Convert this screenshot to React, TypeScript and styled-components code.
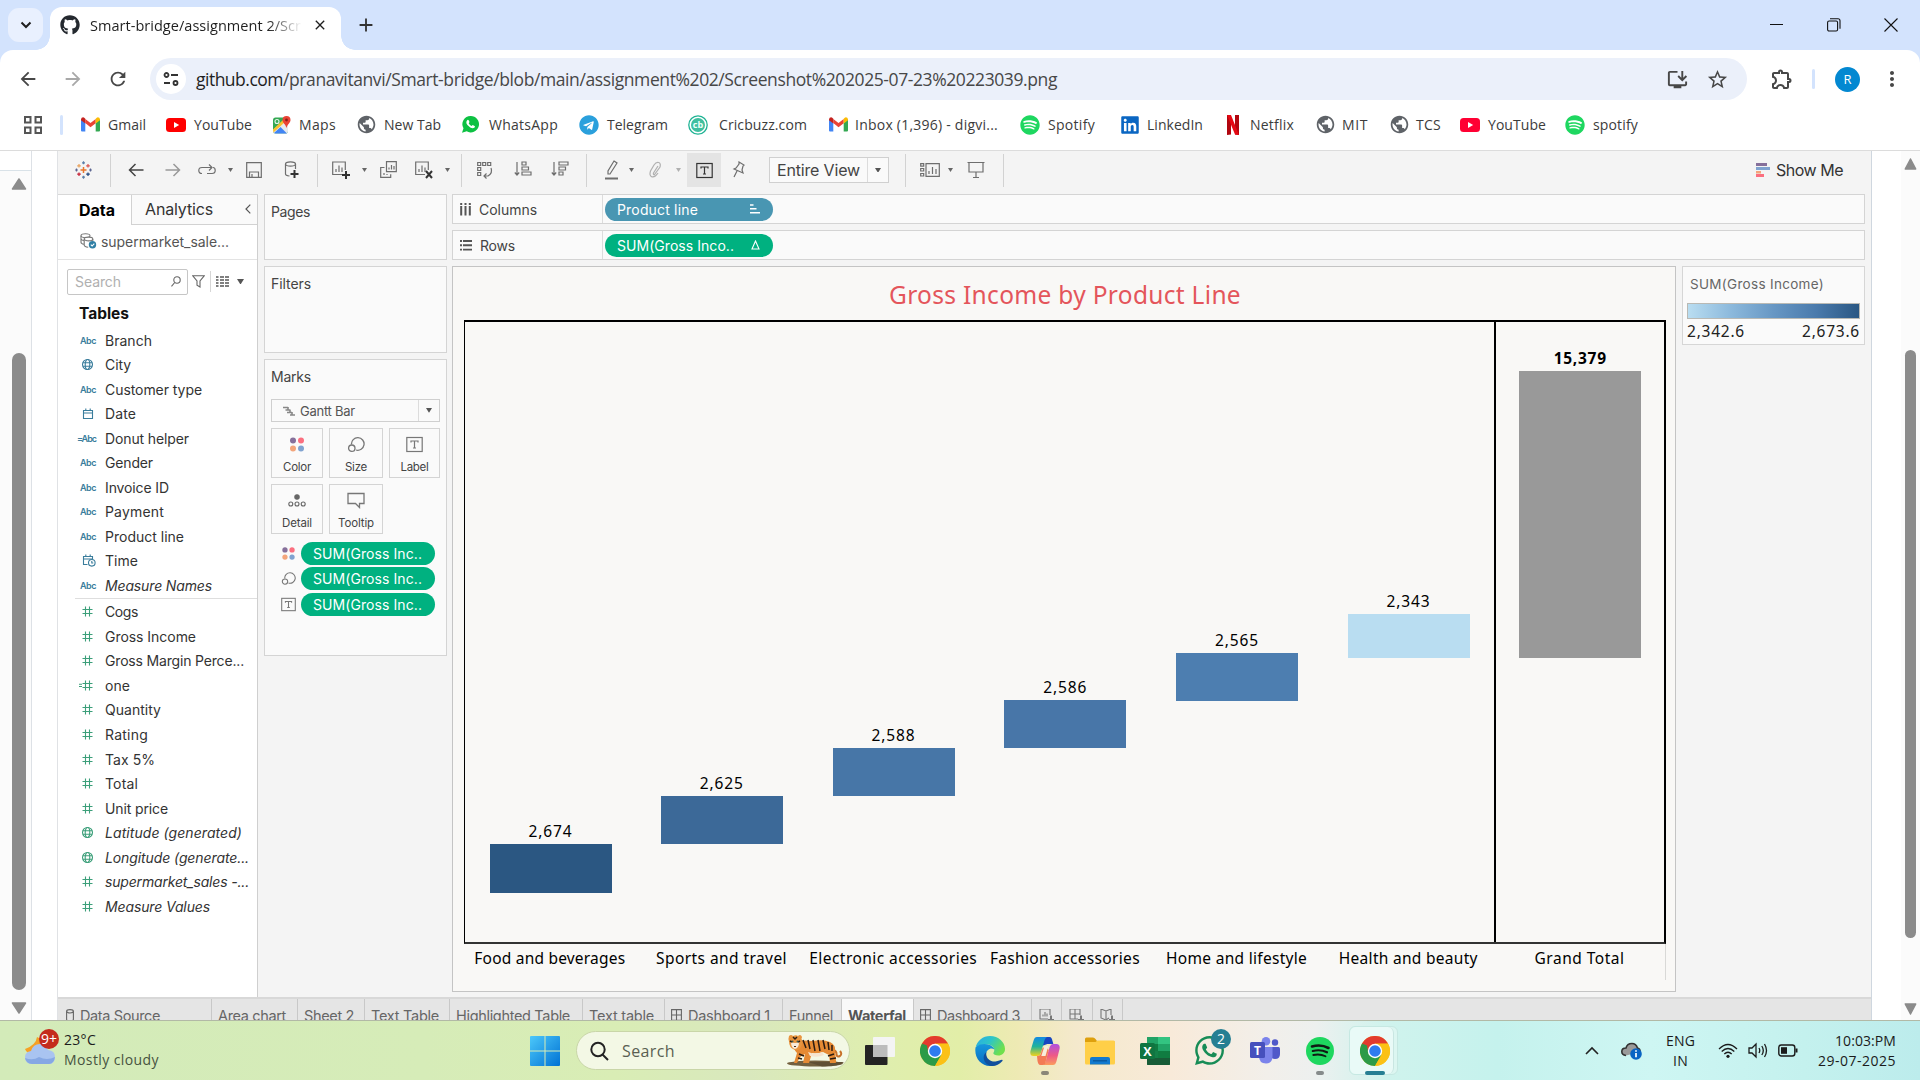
import React, { useLayoutEffect, useRef } from "react";
import styled, { createGlobalStyle, css } from "styled-components";
import { FaGithub, FaSpotify, FaWhatsapp, FaTelegram, FaLinkedin } from "react-icons/fa";
import {
  MdArrowBack,
  MdArrowForward,
  MdRefresh,
  MdStarBorder,
  MdMoreVert,
  MdOutlineExtension,
  MdOutlineInstallDesktop,
  MdClose,
  MdAdd,
  MdPublic,
} from "react-icons/md";

const ui = `"Open Sans", "Noto Sans", sans-serif`;
const panelFont = `Inter, "Liberation Sans", sans-serif`;
const chartFont = `"Noto Sans", "Open Sans", sans-serif`;

const Global = createGlobalStyle`
  *, *::before, *::after { box-sizing: border-box; }
  html, body { margin: 0; padding: 0; background: #fff; }
  body { font-family: ${ui}; overflow: hidden; }
  svg { display: block; flex: none; }
`;

/* Text whose tracking is adjusted so that it fills a known width. */
const FitSpan = styled.span`
  display: inline-block;
  white-space: pre;
`;
function Fit({ w, children }: { w: number; children: string }) {
  const ref = useRef<HTMLSpanElement>(null);
  useLayoutEffect(() => {
    const el = ref.current;
    if (!el) return;
    el.style.letterSpacing = "0px";
    const natural = el.getBoundingClientRect().width;
    el.style.letterSpacing = `${(w - natural) / children.length}px`;
  }, [w, children]);
  return <FitSpan ref={ref}>{children}</FitSpan>;
}

const Screen = styled.div`
  width: 1920px;
  height: 1080px;
  display: flex;
  flex-direction: column;
  overflow: hidden;
  background: #fff;
`;

/* ---------- Browser chrome ---------- */
const TabStrip = styled.div`
  height: 50px;
  flex: none;
  background: #d3e3fd;
  display: flex;
  align-items: flex-start;
  padding-left: 8px;
`;
const TabSearch = styled.div`
  width: 35px;
  height: 34px;
  margin-top: 8px;
  border-radius: 11px;
  background: #e9f0fe;
  display: flex;
  align-items: center;
  justify-content: center;
`;
const Tab = styled.div`
  position: relative;
  width: 291px;
  height: 43px;
  margin: 7px 0 0 7px;
  padding: 0 12px 7px 10px;
  background: #fff;
  border-radius: 12px 12px 0 0;
  display: flex;
  align-items: center;
  font-size: 14.5px;
  color: #1f1f1f;
  &::before, &::after {
    content: "";
    position: absolute;
    bottom: 0;
    width: 14px;
    height: 14px;
  }
  &::before { left: -14px; background: radial-gradient(circle at 0 0, transparent 13.5px, #fff 14px); }
  &::after { right: -14px; background: radial-gradient(circle at 100% 0, transparent 13.5px, #fff 14px); }
`;
const TabTitle = styled.div`
  width: 211px;
  margin: 0 11px 0 10px;
  overflow: hidden;
  white-space: nowrap;
  -webkit-mask-image: linear-gradient(90deg, #000 178px, transparent 212px);
  mask-image: linear-gradient(90deg, #000 178px, transparent 212px);
`;
const NewTab = styled.div`
  margin: 14px 0 0 14px;
  color: #333;
  flex: 1;
`;
const WindowButtons = styled.div`
  display: flex;
  align-items: center;
  height: 49px;
  gap: 43px;
  padding-right: 22px;
`;
const TopRow = styled.div`
  height: 58px;
  flex: none;
  background: #d3e3fd;
  display: flex;
`;
const TopInner = styled.div`
  flex: 1;
  background: #fff;
  border-radius: 13px 13px 0 0;
  display: flex;
  align-items: center;
  padding: 0 16px 0 17px;
  color: #474747;
`;
const NavButtons = styled.div`
  display: flex;
  gap: 23px;
  width: 133px;
`;
const Omnibox = styled.div`
  width: 1597px;
  height: 42px;
  border-radius: 21px;
  background: #ebf0fa;
  display: flex;
  align-items: center;
  padding: 0 18px 0 6px;
`;
const SiteInfo = styled.div`
  width: 30px;
  height: 30px;
  border-radius: 50%;
  background: #fff;
  display: flex;
  align-items: center;
  justify-content: center;
  margin-right: 10px;
`;
const Url = styled.div`
  flex: 1;
  font-size: 17.5px;
  color: #474747;
  white-space: nowrap;
  b { font-weight: 400; color: #1f1f1f; }
`;
const OmniIcons = styled.div`
  display: flex;
  align-items: center;
  gap: 17px;
`;
const ActionIcons = styled.div`
  flex: 1;
  display: flex;
  align-items: center;
  padding-left: 23px;
`;
const ActionDivider = styled.div`
  width: 3px;
  height: 20px;
  background: #d3e3fd;
  border-radius: 2px;
  margin: 0 20px 0 18px;
`;
const Avatar = styled.div`
  width: 25px;
  height: 25px;
  border-radius: 50%;
  background: #0388d1;
  color: #fff;
  font-size: 13px;
  display: flex;
  align-items: center;
  justify-content: center;
  margin-right: 20px;
`;
const Bookmarks = styled.div`
  height: 43px;
  flex: none;
  display: flex;
  align-items: center;
  padding: 0 0 9px 24px;
  border-bottom: 1px solid #dcdcdc;
  font-size: 14px;
  color: #3c3c3c;
`;
const BookmarkGrid = styled.div`
  width: 36px;
`;
const BookmarkDivider = styled.div`
  width: 3px;
  height: 20px;
  background: #d3e3fd;
  border-radius: 2px;
  margin-right: 18px;
`;
const Bookmark = styled.div<{ $w: number; $icon: number }>`
  width: ${(p) => p.$w}px;
  display: flex;
  align-items: center;
  white-space: nowrap;
  flex: none;
  > :first-child { width: ${(p) => p.$icon}px; flex: none; display: flex; }
`;

const GmailIcon = () => (
  <svg width="19" height="15" viewBox="0 0 19 15">
    <path d="M0 2v11.5q0 1 1 1h3.3V6z" fill="#4285f4" />
    <path d="M19 2v11.5q0 1-1 1h-3.3V6z" fill="#34a853" />
    <path d="M4.3 6v-4l5.2 4 5.2-4v4.2l-5.2 4z" fill="#ea4335" />
    <path d="M0 2.2Q.3.2 2.2.2 3.2.4 4.3 1.7V6.4L0 3.2z" fill="#c5221f" />
    <path d="M19 2.2Q18.7.2 16.8.2 15.8.4 14.7 1.7V6.4L19 3.2z" fill="#fbbc04" />
  </svg>
);
const YoutubeIcon = ({ c }: { c: string }) => (
  <svg width="20" height="14" viewBox="0 0 20 14">
    <rect width="20" height="14" rx="3.5" fill={c} />
    <path d="M8 4l5.2 3L8 10z" fill="#fff" />
  </svg>
);
const MapsIcon = () => (
  <svg width="19" height="18" viewBox="0 0 19 18">
    <rect x="1" y="1.5" width="15" height="16" rx="2.5" fill="#34a853" />
    <path d="M1 14L12 4l4 2v9q0 2.5-2.5 2.5H3.5Q1 17.5 1 15z" fill="#e8eaed" />
    <path d="M2 17l6.5-6 6.5 6.5H3.5z" fill="#4285f4" />
    <path d="M1 13.5L11 4l2 2L1.5 16.5z" fill="#fbc02d" />
    <path d="M14.5 0a4 4 0 0 1 4 4c0 3-3.2 4-4 8-.8-4-4-5-4-8a4 4 0 0 1 4-4z" fill="#ea4335" />
    <circle cx="14.5" cy="4" r="1.4" fill="#8c1d18" />
    <circle cx="5" cy="5.5" r="2" fill="none" stroke="#e6f4ea" strokeWidth="1.1" />
  </svg>
);
const CricbuzzIcon = () => (
  <svg width="20" height="20" viewBox="0 0 20 20">
    <circle cx="10" cy="10" r="9.2" fill="#fff" stroke="#1fb394" strokeWidth="1.3" />
    <circle cx="10" cy="10" r="7" fill="#3fbf9f" />
    <text x="10" y="13" textAnchor="middle" fontSize="9" fontWeight="700" fill="#effffb" fontFamily="Open Sans, sans-serif">cb</text>
  </svg>
);
const NetflixIcon = () => (
  <svg width="12" height="20" viewBox="0 0 12 20">
    <path d="M0 0h4v19.5L0 20z" fill="#b1060f" />
    <path d="M8 0h4v20l-4-.5z" fill="#b1060f" />
    <path d="M0 0h4l8 20-4-.5z" fill="#e50914" />
  </svg>
);
const WhatsAppSmall = () => (
  <svg width="17" height="17" viewBox="0 0 17 17">
    <path d="M8.7 0a8.2 8.2 0 1 1-4 15.3L0 16.8l1.5-4.5A8.2 8.2 0 0 1 8.7 0z" fill="#0dc143" />
    <path d="M5 4.500q1-1.300 1.800 0l.7 1.600-.8 1.200q1 1.900 2.900 2.700l1.100-1 1.900 1q.8.5 0 1.400-1.700 1.500-4.400 0Q5 9.500 4.400 7.300 4.100 5.500 5 4.500z" fill="#fff" />
  </svg>
);

type Mark = { w: number; icon: number; node: React.ReactNode; label: string; tw: number };
const bookmarks: Mark[] = [
  { w: 85, icon: 27, node: <GmailIcon />, label: "Gmail", tw: 38 },
  { w: 106, icon: 28, node: <YoutubeIcon c="#f00" />, label: "YouTube", tw: 58 },
  { w: 84, icon: 27, node: <MapsIcon />, label: "Maps", tw: 37 },
  { w: 106, icon: 28, node: <MdPublic size={21} color="#5f6368" />, label: "New Tab", tw: 57 },
  { w: 117, icon: 27, node: <WhatsAppSmall />, label: "WhatsApp", tw: 69 },
  { w: 109, icon: 28, node: <FaTelegram size={20} color="#2ba0dc" />, label: "Telegram", tw: 61 },
  { w: 141, icon: 31, node: <CricbuzzIcon />, label: "Cricbuzz.com", tw: 88 },
  { w: 191, icon: 26, node: <GmailIcon />, label: "Inbox (1,396) - digvi...", tw: 143 },
  { w: 100, icon: 28, node: <FaSpotify size={20} color="#1ed760" />, label: "Spotify", tw: 47 },
  { w: 107, icon: 27, node: <FaLinkedin size={20} color="#0a66c2" />, label: "LinkedIn", tw: 56 },
  { w: 88, icon: 23, node: <NetflixIcon />, label: "Netflix", tw: 44 },
  { w: 74, icon: 27, node: <MdPublic size={21} color="#5f6368" />, label: "MIT", tw: 26 },
  { w: 71, icon: 27, node: <MdPublic size={21} color="#5f6368" />, label: "TCS", tw: 25 },
  { w: 105, icon: 28, node: <YoutubeIcon c="#ff0033" />, label: "YouTube", tw: 58 },
  { w: 90, icon: 28, node: <FaSpotify size={20} color="#1ed760" />, label: "spotify", tw: 45 },
];

/* ---------- Page ---------- */
const Page = styled.div`
  height: 869px;
  flex: none;
  display: flex;
  overflow: hidden;
`;
const LeftGutter = styled.div`
  width: 57px;
  flex: none;
  display: flex;
`;
const ScrollColumn = styled.div`
  width: 32px;
  border-right: 1px solid #dde1e6;
  display: flex;
  flex-direction: column;
`;
const ScrollHead = styled.div`
  height: 20px;
  border-bottom: 1px solid #d9e2e8;
`;
const ScrollTrack = styled.div<{ $pl: number }>`
  flex: 1;
  background: #fbfbfb;
  padding: 7px 0 0 ${(p) => p.$pl}px;
  display: flex;
  flex-direction: column;
`;
const Thumb = styled.div<{ $top: number; $h: number; $w: number; $after: number }>`
  width: ${(p) => p.$w}px;
  height: ${(p) => p.$h}px;
  margin: ${(p) => p.$top}px 0 ${(p) => p.$after}px 1px;
  border-radius: 8px;
  background: #8b8b8b;
  flex: none;
`;
const ScrollArrow = ({ down, w = 16 }: { down?: boolean; w?: number }) => (
  <svg width={w} height="12" viewBox="0 0 16 12" preserveAspectRatio="none">
    <path d={down ? "M1.5 1h13L8 11z" : "M1.5 11h13L8 1z"} fill="#8b8b8b" stroke="#8b8b8b" strokeWidth="1.5" strokeLinejoin="round" />
  </svg>
);
const RightGutter = styled.div`
  width: 49px;
  flex: none;
  display: flex;
  border-left: 1px solid #cfd7df;
  padding-left: 29px;
`;
const Tableau = styled.div`
  width: 1814px;
  background: #f4f4f4;
  border-left: 1px solid #e0e2e5;
  display: flex;
  flex-direction: column;
  font-family: ${panelFont};
  color: #444;
`;
const ToolBar = styled.div`
  height: 43px;
  flex: none;
  display: flex;
  align-items: center;
  padding-bottom: 5px;
`;
const Slot = styled.div<{ $w: number; $ml: number; $on?: boolean }>`
  width: ${(p) => p.$w}px;
  margin-left: ${(p) => p.$ml}px;
  height: 34px;
  flex: none;
  display: flex;
  align-items: center;
  justify-content: center;
  ${(p) => p.$on && css`background: #e4e4e4;`}
`;
const Sep = styled.div<{ $ml: number }>`
  width: 1px;
  height: 33px;
  background: #d2d2d2;
  margin-left: ${(p) => p.$ml}px;
  flex: none;
`;
const ViewSelect = styled.div`
  width: 120px;
  height: 26px;
  margin-left: 24px;
  border: 1px solid #d0d0d0;
  background: #fafafa;
  display: flex;
  align-items: center;
  font-size: 16px;
  color: #444;
  padding-left: 7px;
  flex: none;
`;
const SelectArrow = styled.div`
  margin-left: auto;
  width: 21px;
  height: 100%;
  border-left: 1px solid #dcdcdc;
  display: flex;
  align-items: center;
  justify-content: center;
`;
const ShowMe = styled.div`
  margin: 0 28px 0 auto;
  display: flex;
  align-items: center;
  gap: 6px;
  font-size: 16px;
  color: #333;
`;
const Caret = ({ s = 5, c = "#666" }: { s?: number; c?: string }) => (
  <svg width={s} height={s * 0.8} viewBox="0 0 10 8">
    <path d="M0 0h10L5 8z" fill={c} />
  </svg>
);

const Work = styled.div`
  height: 803px;
  flex: none;
  display: flex;
`;
const DataPane = styled.div`
  width: 200px;
  flex: none;
  background: #fff;
  border-right: 1px solid #cfcfcf;
  border-top: 1px solid #d8d8d8;
  display: flex;
  flex-direction: column;
`;
const PaneTabs = styled.div`
  height: 30px;
  flex: none;
  display: flex;
  color: #222;
`;
const PaneTab = styled.div<{ $active?: boolean }>`
  width: ${(p) => (p.$active ? 73 : 126)}px;
  padding-left: ${(p) => (p.$active ? 21 : 13)}px;
  padding-right: 6px;
  padding-bottom: 1px;
  display: flex;
  align-items: center;
  font-size: 16px;
  font-weight: ${(p) => (p.$active ? 700 : 400)};
  color: ${(p) => (p.$active ? "#000" : "#333")};
  justify-content: space-between;
  ${(p) =>
    !p.$active &&
    css`
      background: #fafafa;
      border-left: 1px solid #d2d2d2;
      border-bottom: 1px solid #d2d2d2;
    `}
`;
const Source = styled.div`
  height: 35px;
  flex: none;
  border-bottom: 1px solid #e3e3e3;
  display: flex;
  align-items: center;
  padding: 0 0 2px 22px;
  gap: 4px;
  font-size: 14px;
  color: #555;
`;
const SearchRow = styled.div`
  height: 25px;
  margin: 9px 0 0 9px;
  flex: none;
  display: flex;
  align-items: center;
`;
const SearchBox = styled.div`
  width: 121px;
  height: 26px;
  border: 1px solid #c6c6c6;
  border-radius: 2px;
  display: flex;
  align-items: center;
  justify-content: space-between;
  padding: 0 6px 0 7px;
  font-size: 14px;
  color: #b0b0b0;
  margin-right: 4px;
`;
const MiniSep = styled.div`
  width: 1px;
  height: 21px;
  background: #d6d6d6;
  margin: 0 5px 0 5px;
`;
const TablesTitle = styled.div`
  margin: 11px 0 5px 21px;
  height: 18px;
  line-height: 18px;
  font-size: 15.5px;
  font-weight: 700;
  color: #111;
`;
const FieldRow = styled.div<{ $italic?: boolean; $h: number }>`
  height: ${(p) => p.$h}px;
  flex: none;
  display: flex;
  align-items: center;
  font-size: 14px;
  color: #333;
  font-style: ${(p) => (p.$italic ? "italic" : "normal")};
`;
const FieldIcon = styled.div`
  width: 47px;
  padding-right: 9px;
  flex: none;
  display: flex;
  align-items: center;
  justify-content: flex-end;
  color: #3a7d9c;
  font-size: 9px;
  font-weight: 600;
  font-style: normal;
`;
const GlyphNudge = styled.div<{ $right: number }>`
  margin-right: ${(p) => p.$right}px;
`;
const FieldRule = styled.div`
  height: 1px;
  background: #dedede;
  margin: 0 0 1px 17px;
  flex: none;
`;

const BLUE = "#3a7d9c";
const GREEN = "#3c9f7a";
const AbcIcon = ({ calc }: { calc?: boolean }) => <Fit w={calc ? 19 : 16}>{calc ? "=Abc" : "Abc"}</Fit>;
const GlobeGlyph = ({ c }: { c: string }) => (
  <svg width="13" height="13" viewBox="0 0 13 13" fill="none" stroke={c} strokeWidth="1.1">
    <circle cx="6.5" cy="6.5" r="5" />
    <ellipse cx="6.5" cy="6.5" rx="2.3" ry="5" />
    <path d="M2 4.7h9M2 8.3h9" />
  </svg>
);
const HashGlyph = ({ calc }: { calc?: boolean }) => (
  <svg width="14" height="11" viewBox="0 0 14 11" stroke={GREEN} strokeWidth="1.1" fill="none">
    <path d="M6.500.5v10M10.500.5v10M3.500 3.500h10M3.500 7.500h10" />
    {calc && <path d="M0 4.300h3M0 6.500h3" />}
  </svg>
);
const CalGlyph = () => (
  <svg width="12" height="12" viewBox="0 0 12 12" stroke={BLUE} fill="none">
    <path d="M1.500 2.500h9v8h-9zM1.500 5h9M3.800.5v2.500M8.200.5v2.500" strokeWidth="1.1" />
  </svg>
);
const CalClockGlyph = () => (
  <svg width="14" height="13" viewBox="0 0 14 13" stroke={BLUE} fill="none" strokeWidth="1.1">
    <path d="M5.500 10.500h-4v-8h9v3M1.500 5h9M3.800.5v2.500M8.200.5v2.500" />
    <circle cx="9.800" cy="8.800" r="3.300" fill="#fff" />
    <path d="M9.800 7v2h1.500" />
  </svg>
);
type Field = { k: string; n: string; w: number; it?: boolean };
const dims: Field[] = [
  { k: "abc", n: "Branch", w: 47 },
  { k: "geo", n: "City", w: 26 },
  { k: "abc", n: "Customer type", w: 97 },
  { k: "cal", n: "Date", w: 31 },
  { k: "abcc", n: "Donut helper", w: 84 },
  { k: "abc", n: "Gender", w: 48 },
  { k: "abc", n: "Invoice ID", w: 64 },
  { k: "abc", n: "Payment", w: 59 },
  { k: "abc", n: "Product line", w: 79 },
  { k: "time", n: "Time", w: 33 },
  { k: "abc", n: "Measure Names", w: 107, it: true },
];
const measures: Field[] = [
  { k: "num", n: "Cogs", w: 33 },
  { k: "num", n: "Gross Income", w: 91 },
  { k: "num", n: "Gross Margin Perce...", w: 139 },
  { k: "numc", n: "one", w: 25 },
  { k: "num", n: "Quantity", w: 56 },
  { k: "num", n: "Rating", w: 43 },
  { k: "num", n: "Tax 5%", w: 50 },
  { k: "num", n: "Total", w: 33 },
  { k: "num", n: "Unit price", w: 63 },
  { k: "geog", n: "Latitude (generated)", w: 137, it: true },
  { k: "geog", n: "Longitude (generate...", w: 144, it: true },
  { k: "num", n: "supermarket_sales -...", w: 144, it: true },
  { k: "num", n: "Measure Values", w: 105, it: true },
];
function glyph(k: string) {
  switch (k) {
    case "abc": return <AbcIcon />;
    case "abcc": return <AbcIcon calc />;
    case "geo": return <GlobeGlyph c={BLUE} />;
    case "geog": return <GlobeGlyph c={GREEN} />;
    case "cal": return <CalGlyph />;
    case "time": return <CalClockGlyph />;
    case "numc": return <HashGlyph calc />;
    default: return <HashGlyph />;
  }
}
const glyphInset: Record<string, number> = { geo: 2, geog: 2, cal: 2, num: 3, numc: 3 };
const FieldItem = ({ f, h }: { f: Field; h: number }) => (
  <FieldRow $h={h} $italic={f.it}>
    <FieldIcon>
      <GlyphNudge $right={glyphInset[f.k] ?? 0}>{glyph(f.k)}</GlyphNudge>
    </FieldIcon>
    <Fit w={f.w}>{f.n}</Fit>
  </FieldRow>
);

const Cards = styled.div`
  width: 183px;
  margin-left: 6px;
  flex: none;
  display: flex;
  flex-direction: column;
  gap: 6px;
`;
const Card = styled.div<{ $h: number }>`
  height: ${(p) => p.$h}px;
  background: #fafafa;
  border: 1px solid #d4d4d4;
  padding: 0 6px;
  font-size: 14px;
  color: #444;
  flex: none;
`;
const CardTitle = styled.div`
  height: 33px;
  line-height: 33px;
`;
const MarkType = styled.div`
  height: 23px;
  width: 169px;
  margin-top: 6px;
  border: 1px solid #cfcfcf;
  display: flex;
  align-items: center;
  font-size: 13px;
  color: #555;
  padding-left: 11px;
  gap: 5px;
`;
const MarkGrid = styled.div`
  margin-top: 6px;
  display: grid;
  grid-template-columns: 52px 54px 51px;
  column-gap: 6px;
  row-gap: 6px;
  grid-auto-rows: 50px;
`;
const MarkButton = styled.div`
  border: 1px solid #d4d4d4;
  display: flex;
  flex-direction: column;
  align-items: center;
  font-size: 11.5px;
  line-height: 14px;
  color: #444;
  padding-top: 7px;
  > svg { margin-bottom: 7px; }
`;
const PillList = styled.div`
  margin-top: 8px;
  display: flex;
  flex-direction: column;
  gap: 2.4px;
`;
const PillRow = styled.div`
  display: flex;
  align-items: center;
  gap: 5px;
  padding-left: 10px;
  > svg { width: 15px; height: 15px; }
`;
const Pill = styled.div<{ $w: number; $c: string; $pl: number }>`
  width: ${(p) => p.$w}px;
  height: 23px;
  border-radius: 12px;
  background: ${(p) => p.$c};
  color: #fff;
  display: flex;
  align-items: center;
  justify-content: space-between;
  padding: 0 13px 0 ${(p) => p.$pl}px;
  font-size: 14px;
  flex: none;
`;
const DotsIcon = () => (
  <svg width="16" height="17" viewBox="0 0 16 17">
    <circle cx="4" cy="4.5" r="3" fill="#86709b" />
    <circle cx="12" cy="4.5" r="3" fill="#fb6f7f" />
    <circle cx="4" cy="12.5" r="3" fill="#f3a57b" />
    <circle cx="12" cy="12.5" r="3" fill="#80a3d0" />
  </svg>
);
const SizeIcon = () => (
  <svg width="18" height="17" viewBox="0 0 18 17" fill="none" stroke="#777" strokeWidth="1.3">
    <path d="M4.500 8.500A6.300 6.300 0 1 1 9 14" />
    <circle cx="4.8" cy="12.2" r="3.2" />
  </svg>
);
const TIcon = ({ c = "#777", w = 17 }: { c?: string; w?: number }) => (
  <svg width={w} height="17" viewBox="0 0 17 17" fill="none" stroke={c} strokeWidth="1.2">
    <rect x=".8" y="1.5" width="15.4" height="14" />
    <path d="M5 6.500V5h7v1.500M8.500 5v7M7 12h3" />
  </svg>
);
const DetailIcon = () => (
  <svg width="18" height="17" viewBox="0 0 18 17" fill="none" stroke="#666" strokeWidth="1.1">
    <circle cx="9" cy="5" r="2.2" fill="#666" />
    <circle cx="2.8" cy="12" r="2" />
    <circle cx="9" cy="12" r="2" />
    <circle cx="15.2" cy="12" r="2" />
  </svg>
);
const TooltipIcon = () => (
  <svg width="18" height="17" viewBox="0 0 18 17" fill="none" stroke="#777" strokeWidth="1.3">
    <path d="M1 1.500h16v10h-4.500v4l-4-4H1z" />
  </svg>
);

const Canvas = styled.div`
  width: 1413px;
  margin-left: 5px;
  display: flex;
  flex-direction: column;
`;
const Shelf = styled.div`
  height: 30px;
  margin-bottom: 6px;
  border: 1px solid #d4d4d4;
  background: #fafafa;
  display: flex;
  align-items: center;
  flex: none;
  font-size: 14px;
`;
const ShelfName = styled.div`
  width: 150px;
  height: 100%;
  border-right: 1px solid #dcdcdc;
  display: flex;
  align-items: center;
  padding: 0 0 0 7px;
  gap: 8px;
  margin-right: 2px;
  color: #444;
`;
const ViewArea = styled.div`
  display: flex;
  gap: 6px;
  align-items: flex-start;
`;
const View = styled.div`
  width: 1224px;
  height: 726px;
  background: #f9f8f6;
  border: 1px solid #c4c4c4;
  padding: 14px 9px 0 11px;
  font-family: ${chartFont};
`;
const ChartTitle = styled.div`
  height: 36px;
  line-height: 28px;
  text-align: center;
  color: #e4555b;
  font-size: 24.5px;
`;
const ChartFrame = styled.div`
  height: 624px;
  margin-top: 3px;
  border: 2px solid #000;
  border-left-width: 1px;
  border-bottom-color: #333;
  display: grid;
  grid-template-columns: 171px repeat(5, 171.7px) 1fr;
`;
const ChartCell = styled.div<{ $total?: boolean }>`
  display: flex;
  flex-direction: column;
  align-items: center;
  justify-content: flex-end;
  ${(p) => p.$total && css`border-left: 2px solid #000;`}
`;
const BarLabel = styled.div<{ $bold?: boolean }>`
  height: 20px;
  line-height: 20px;
  margin-bottom: 3px;
  font-size: 15.5px;
  color: #000;
  font-weight: ${(p) => (p.$bold ? 700 : 400)};
`;
const Bar = styled.div<{ $c: string }>`
  width: 122px;
  background: ${(p) => p.$c};
  flex: none;
`;
const AxisLabels = styled.div`
  display: grid;
  grid-template-columns: repeat(6, 171.7px) 1fr;
  height: 36px;
  border-right: 1px solid #d9d9d7;
  text-align: center;
  font-size: 15.5px;
  line-height: 29px;
  color: #000;
`;
const bars = [
  { n: "Food and beverages", w: 151, v: "2,674", top: 844, bottom: 893, c: "#2b5782" },
  { n: "Sports and travel", w: 131, v: "2,625", top: 796, bottom: 844, c: "#3c6998" },
  { n: "Electronic accessories", w: 168, v: "2,588", top: 748, bottom: 796, c: "#4776a7" },
  { n: "Fashion accessories", w: 150, v: "2,586", top: 700, bottom: 748, c: "#4876a8" },
  { n: "Home and lifestyle", w: 141, v: "2,565", top: 653, bottom: 701, c: "#4d7eb0" },
  { n: "Health and beauty", w: 139, v: "2,343", top: 614, bottom: 658, c: "#b9ddf1" },
  { n: "Grand Total", w: 90, v: "15,379", top: 371, bottom: 658, c: "#999999" },
];
const FRAME_BOTTOM = 942;

const Legend = styled.div`
  width: 183px;
  height: 79px;
  border: 1px solid #d6d6d6;
  background: #fafafa;
  padding: 0 4px;
`;
const LegendTitle = styled.div`
  height: 36px;
  line-height: 34px;
  padding-left: 3px;
  font-size: 13.5px;
  color: #666;
`;
const LegendRamp = styled.div`
  height: 16px;
  border: 1px solid #b9b9b4;
  background: linear-gradient(90deg, #b9ddf1, #8cb9dc 25%, #6797c4 50%, #4a7aac 75%, #2a5783);
`;
const LegendScale = styled.div`
  display: flex;
  justify-content: space-between;
  font-family: ${chartFont};
  font-size: 15.5px;
  line-height: 25px;
  color: #222;
`;

const SheetTabs = styled.div`
  height: 30px;
  background: #e5e5e5;
  border-top: 2px solid #d8d8d8;
  display: flex;
  font-size: 14.5px;
  color: #666;
  flex: none;
`;
const SheetTab = styled.div<{ $w: number; $active?: boolean }>`
  width: ${(p) => p.$w}px;
  border-right: 1px solid #c8c8c8;
  padding: 7px 0 0 6px;
  display: flex;
  align-items: flex-start;
  gap: 6px;
  flex: none;
  line-height: 19px;
  ${(p) => p.$active && css`background: #f9f9f9; font-weight: 700; color: #555;`}
  > svg { margin-top: 3px; }
`;
const GridGlyph = () => (
  <svg width="11" height="12" viewBox="0 0 11 12" fill="none" stroke="#666" strokeWidth="1.1">
    <path d="M.6.6h9.800v10.800H.6zM5.500.6v10.800M.6 6h9.800" />
  </svg>
);
const DbGlyph = () => (
  <svg width="10" height="13" viewBox="-2 0 10 13" fill="none" stroke="#666" strokeWidth="1.1">
    <ellipse cx="4" cy="2.3" rx="3.4" ry="1.7" />
    <path d="M.6 2.300v8c0 2.200 6.800 2.200 6.800 0v-8" />
  </svg>
);
const NewSheetGlyph = ({ k }: { k: number }) => (
  <svg width="16" height="14" viewBox="-1 1 16 14" fill="none" stroke="#777" strokeWidth="1.1">
    {k === 0 && <path d="M9 11H1V1h10v6M4 8.500V6.500M6 8.500V4M8 8.500V5.500" />}
    {k === 1 && <path d="M9 11H1V1h10v6M6 1v10M1 6h10" />}
    {k === 2 && <path d="M9 10L6 12 1 10V1l5 2 5-2v6M6 3v8" />}
    <path d="M12 7.500v6M9 12h6" strokeWidth="2" />
  </svg>
);

/* ---------- Taskbar ---------- */
const Taskbar = styled.div`
  height: 60px;
  flex: none;
  border-top: 1px solid #b2b9a6;
  background: linear-gradient(90deg, #d3ebb9 0, #d6ecb8 22%, #d9edb5 32%, #d9e8bd 39%, #dfeeae 46%, #e2eea8 50%, #eeeab4 53%, #f4e9cc 56%, #f8ead9 61%, #f2efea 66%, #edf0ef 68.5%, #d0f3ed 72%, #c5f2ed 78%, #cef6f3 86%, #c4f1ee 94%, #bcecec 100%);
  display: flex;
  align-items: center;
  font-family: ${ui};
  font-size: 14px;
`;
const Weather = styled.div`
  width: 530px;
  padding-left: 24px;
  display: flex;
  align-items: center;
  gap: 4px;
`;
const WeatherText = styled.div`
  line-height: 20px;
  color: #1c1c1c;
  padding-bottom: 1px;
  > div { height: 20px; }
  > div:last-child { color: #47533f; }
`;
const WeatherArt = styled.div`
  position: relative;
  width: 36px;
  height: 44px;
`;
const Badge = styled.div<{ $c: string; $top: number; $right: number }>`
  position: absolute;
  top: ${(p) => p.$top}px;
  right: ${(p) => p.$right}px;
  width: 20px;
  height: 20px;
  border-radius: 50%;
  background: ${(p) => p.$c};
  color: #fff;
  font-size: 14px;
  line-height: 19px;
  text-align: center;
`;
const SearchPill = styled.div`
  width: 274px;
  height: 39px;
  margin: 0 2px 0 16px;
  border-radius: 20px;
  border: 1px solid #c9d6a8;
  background: #f3f8e5;
  display: flex;
  align-items: center;
  padding: 0 5px 0 13px;
  font-size: 16px;
  color: #5a5f52;
  flex: none;
  > svg:last-child { margin-left: auto; }
`;
const SearchText = styled.div`
  margin-left: 13px;
`;
const TaskApp = styled.div`
  position: relative;
  width: 55px;
  height: 59px;
  flex: none;
  display: flex;
  align-items: center;
  justify-content: center;
`;
const ActiveTile = styled.div`
  position: absolute;
  left: 2px;
  top: 5px;
  width: 49px;
  height: 49px;
  border-radius: 6px;
  background: #dcf6f1;
  border: 1px solid #c6e8e2;
  &::after {
    content: "";
    position: absolute;
    left: 0;
    top: 0;
    width: 44px;
    height: 47px;
    border-radius: 6px;
    background: #e9faf7;
    border-right: 1px solid #c9e6e2;
  }
`;
const Indicator = styled.div<{ $w: number; $c: string }>`
  position: absolute;
  bottom: 5px;
  left: 50%;
  margin-left: ${(p) => -p.$w / 2}px;
  width: ${(p) => p.$w}px;
  height: 4px;
  border-radius: 2px;
  background: ${(p) => p.$c};
`;
const IconLayer = styled.div`
  position: relative;
`;
const Tray = styled.div`
  margin-left: auto;
  padding-right: 24px;
  display: flex;
  align-items: center;
  color: #1b1b1b;
`;
const CloudStatus = styled.div`
  margin-left: 22px;
`;
const TrayLang = styled.div`
  margin: 0 23px 0 24px;
  text-align: center;
  line-height: 20px;
`;
const TrayIcons = styled.div`
  display: flex;
  gap: 10px;
  margin-right: 20px;
`;
const Clock = styled.div`
  text-align: right;
  line-height: 20px;
  > div { height: 20px; }
`;

const Chrome = () => (
  <svg width="30" height="30" viewBox="0 0 48 48">
    <circle cx="24" cy="24" r="24" fill="#fbc116" />
    <path d="M24 24L3.200 12A24 24 0 0 0 24 48l10.400-18z" fill="#2b9b47" />
    <path d="M24 24H12L3.200 12a24 24 0 0 1 41.600 0H24z" fill="#e33b2e" />
    <path d="M13.600 30L3.200 12l8 3z" fill="#2b9b47" />
    <path d="M24 12.500h21L34.400 30 24 48a24 24 0 0 0 20.800-36z" fill="#fbc116" />
    <circle cx="24" cy="24" r="11.5" fill="#fff" />
    <circle cx="24" cy="24" r="9.3" fill="#2f7bf0" />
  </svg>
);
const Edge = () => (
  <svg width="30" height="30" viewBox="0 0 30 30">
    <defs>
      <linearGradient id="eg1" x1="0" y1="0" x2="1" y2=".5"><stop offset="0" stopColor="#2aa9e8" /><stop offset=".5" stopColor="#2cc5c8" /><stop offset="1" stopColor="#6fe04c" /></linearGradient>
      <linearGradient id="eg2" x1="0" y1="0" x2="0" y2="1"><stop offset="0" stopColor="#1698dd" /><stop offset="1" stopColor="#0a6cc0" /></linearGradient>
    </defs>
    <path d="M.5 12C2 4.500 8 0 15 0c8.500 0 15 6.200 15 13 0 4-3 6.500-6.700 6.500-3 0-5-1-5-2.200 0-.8 1-1.300 1-3.300 0-3-3-5.500-7-5.500C6 8.500 1 10 .5 12z" fill="url(#eg1)" />
    <path d="M.5 11.500C2.500 9 6 8 9.500 8c5.500 0 9.500 3 9.800 5.500C16 11 11 14 11 18.500c0 5 4 10 10 10C19 29.700 17 30 15 30 6 30-1 22 .5 11.500z" fill="url(#eg2)" />
    <path d="M11.500 16c-1.500 5 3 10 9 9.500 3-.3 5-1.500 6.500-1.700.8 0 .8.7.2 1.500-3 3.500-7 5-11 4.600C9 29 6 20 11.500 16z" fill="#114f9c" />
  </svg>
);
const Copilot = () => (
  <svg width="30" height="28" viewBox="0 0 30 28">
    <defs>
      <linearGradient id="cp1" x1="0" y1="0" x2="0" y2="1"><stop offset="0" stopColor="#1289e4" /><stop offset=".5" stopColor="#22b39a" /><stop offset="1" stopColor="#f2d21c" /></linearGradient>
      <linearGradient id="cp2" x1="0" y1="0" x2="0" y2="1"><stop offset="0" stopColor="#b04fe0" /><stop offset=".55" stopColor="#ee5a86" /><stop offset="1" stopColor="#fb9d5c" /></linearGradient>
    </defs>
    <path d="M14 0h5.500c2 0 2.500 2 3 4l.8 3h-6L12 9z" fill="#1846c0" />
    <path d="M7 0h10c-2 1-2.500 3-3.300 6l-2.500 9c-.8 2.800-1.700 4-4.200 4H3.500C.5 19-.2 16.500.6 13.500l3-10C4.300 1 5.300 0 7 0z" fill="url(#cp1)" />
    <path d="M23 28H13c2-1 2.500-3 3.300-6l2.500-9c.8-2.800 1.700-6 4.200-6h3.500c3 0 3.700 2.500 2.900 5.500l-3 12C25.700 27 24.700 28 23 28z" fill="url(#cp2)" />
    <path d="M16 28h-5.500c-2 0-2.500-2-3-4L7 19c3 0 3.700-1.500 4.300-4l1.200-4 3.500-1 2.800 3-2.500 9c-.8 3-.8 6-3.300 6z" fill="#f37b55" />
    <path d="M14.500 9h3.800l-2.800 10h-4.200z" fill="#f8efdc" />
  </svg>
);
const Folder = () => (
  <svg width="30" height="28" viewBox="0 0 30 28">
    <path d="M0 2Q0 .5 1.500.5H8q1.500 0 2.500 1.500l1.500 2h16q2 0 2 2v5H0z" fill="#dea00d" />
    <path d="M0 5h10.500l2-1.500H28.500q1.500 0 1.500 1.500v21q0 1.500-1.500 1.500h-27Q0 27.500 0 26z" fill="#ffcf48" />
    <path d="M5 27.500V22q0-2 2-2h16q2 0 2 2v5.500z" fill="#1279cf" />
    <path d="M8 23.800h14" stroke="#0b559a" strokeWidth="1.3" />
  </svg>
);
const Excel = () => (
  <svg width="30" height="28" viewBox="0 0 30 28">
    <path d="M8 0h21q1 0 1 1v26q0 1-1 1H8q-1 0-1-1V1q0-1 1-1z" fill="#148048" />
    <path d="M18 0h11q1 0 1 1v6H18z" fill="#33c481" />
    <path d="M7 1q0-1 1-1h10v7H7zM18 7h12v7H18z" fill="#21a366" />
    <path d="M18 14h12v7H18zM7 7h11v7H7z" fill="#107c41" />
    <path d="M7 21h23v6q0 1-1 1H8q-1 0-1-1z" fill="#185c37" />
    <rect y="6" width="15" height="16" rx="1.5" fill="#107541" />
    <text x="7.5" y="18.5" textAnchor="middle" fill="#fff" fontSize="12.5" fontWeight="700" fontFamily="Open Sans, sans-serif">X</text>
  </svg>
);
const Teams = () => (
  <svg width="30" height="27" viewBox="0 0 30 27">
    <circle cx="25" cy="5.5" r="3.2" fill="#5059c9" />
    <path d="M20 10h8.500q1.500 0 1.500 1.500V17q0 5-5 5-4 0-5-4z" fill="#5059c9" />
    <circle cx="16" cy="4.3" r="4.3" fill="#7b83eb" />
    <path d="M9 10h13.500v9q0 7.500-6.500 7.500-7 0-7-7.500z" fill="#7b83eb" />
    <rect y="5" width="15" height="16" rx="1.5" fill="#4650bd" />
    <text x="7.5" y="17.5" textAnchor="middle" fill="#fff" fontSize="12" fontWeight="700" fontFamily="Open Sans, sans-serif">T</text>
  </svg>
);
const TaskView = () => (
  <svg width="30" height="28" viewBox="0 0 30 28">
    <rect y="8" width="22.5" height="20" rx="1" fill="#242424" />
    <rect x="8" width="22" height="20" rx="1" fill="#f4f4f4" />
    <path d="M8 8h14.500v12H8z" fill="#bcbcbc" />
  </svg>
);
const SpotifyApp = () => (
  <svg width="28" height="28" viewBox="0 0 28 28" fill="none" stroke="#101a14" strokeLinecap="round">
    <circle cx="14" cy="14" r="14" fill="#1ed75f" stroke="none" />
    <path d="M6 9.500Q15 7 22.500 11" strokeWidth="2.6" />
    <path d="M6.800 14Q14.500 12 21 15.300" strokeWidth="2.2" />
    <path d="M7.300 18Q14 16.500 19.500 19.300" strokeWidth="1.8" />
  </svg>
);
const WinLogo = () => (
  <svg width="30" height="30" viewBox="0 0 30 30">
    <defs>
      <linearGradient id="win" x1="0" y1="0" x2="1" y2="1"><stop offset="0" stopColor="#4cc8fa" /><stop offset="1" stopColor="#0072d4" /></linearGradient>
    </defs>
    <path d="M0 1q0-1 1-1h13.500v14.500H0zM15.500 0H29q1 0 1 1v13.500H15.500zM0 15.500h14.500V30H1q-1 0-1-1zM15.500 15.500H30V29q0 1-1 1H15.500z" fill="url(#win)" />
  </svg>
);
const Tiger = () => (
  <svg width="58" height="33" viewBox="0 0 58 33">
    <ellipse cx="29" cy="29.5" rx="28" ry="3" fill="#73603f" />
    <path d="M22 28h36q-6 5-22 4.500z" fill="#5f4f35" />
    <path d="M46 15q5 2 4.500 5.500.5 3 3.500 1.500 2.500-2 0-5" fill="none" stroke="#c8712a" strokeWidth="2" />
    <path d="M12 7q8-1 14 0 12-2 18 1 6 3 5 9l1 10q1 2-2 2h-4l-1-8-6-3q-6 2-11 1l-3 10h-6l2-9-5 3-3 6H8l3-10q-4-4-3-9z" fill="#e58a34" />
    <path d="M22 18q8 3 14 0l2 3q-6 3-14 1z" fill="#f6e4cf" />
    <path d="M3 2q2-2 4 0 3-1.500 5 0 2-2 3.500 0 1 1 0 2.500 2 6-1.500 10-3 3-6 1-5-2-5-8-1-3 0-5.500z" fill="#e8953f" />
    <path d="M5 8q4 2 8 0 0 6-4 7-4-1-4-7z" fill="#f7ecdb" />
    <path d="M17 6l3 8M22 6l2 9M27 6l2 11M32 6l2 11M37 6l2 9M42 8l1 8M46 11v6M13 20l5 2M12 24l4 1M42 22l6-2M44 25l6-1M7 3l2 2 2-2M4 7l2 1M14 7l-2 1" stroke="#2b1c12" strokeWidth="1.5" fill="none" />
    <circle cx="6.5" cy="7.5" r="1" fill="#3a5c54" />
    <circle cx="11.5" cy="7.5" r="1" fill="#3a5c54" />
    <path d="M8 12.500h2" stroke="#4a2b1c" strokeWidth="1.2" />
  </svg>
);

const Ico = ({ w = 18, h = 18, c = "#6e6e6e", children }: { w?: number; h?: number; c?: string; children: React.ReactNode }) => (
  <svg width={w} height={h} viewBox={`0 0 ${w} ${h}`} fill="none" stroke={c} strokeWidth="1.2">{children}</svg>
);
const TableauLogo = () => (
  <svg width="17" height="18" viewBox="0 0 17 18" strokeWidth="1.2">
    <path d="M8.500 6v6M5.500 9h6" stroke="#e8762c" strokeWidth="1.5" />
    <path d="M4 3v3.600M2.200 4.800h3.600" stroke="#e8a15c" />
    <path d="M13 3v3.600M11.200 4.800h3.600" stroke="#d9534f" />
    <path d="M4 11.400V15M2.200 13.200h3.600" stroke="#c72035" />
    <path d="M13 11.400V15M11.200 13.200h3.600" stroke="#1f457e" />
    <path d="M8.500.3v3M7 1.800h3M8.500 14.700v3M7 16.200h3" stroke="#5b7fa8" />
    <path d="M1.500 7.600v2.800M.1 9h2.800M15.500 7.600v2.800M14.100 9h2.800" stroke="#5b6591" />
  </svg>
);

function Tools() {
  return (
    <ToolBar>
      <Slot $w={17} $ml={17}><TableauLogo /></Slot>
      <Sep $ml={18} />
      <Slot $w={16} $ml={17}><Ico w={16} h={14} c="#444"><path d="M15.500 7H1.500M7.500 1L1.500 7l6 6" strokeWidth="1.5" /></Ico></Slot>
      <Slot $w={16} $ml={21}><Ico w={16} h={14} c="#999"><path d="M.5 7h14M8.500 1l6 6-6 6" strokeWidth="1.5" /></Ico></Slot>
      <Slot $w={18} $ml={17}><Ico w={18} h={14}><path d="M4 10.500Q.8 10.500.8 7.500T4 4.500h9.500M11 1.500l3 3-3 3M9 10.500h5q3.200 0 3.200-3T15 4.500" /></Ico></Slot>
      <Slot $w={6} $ml={11}><Caret /></Slot>
      <Slot $w={16} $ml={13}><Ico w={16} h={16}><path d="M.7.7h14.600v14.600H.7zM3.500 15v-5h9v5M6 12v3" /></Ico></Slot>
      <Slot $w={16} $ml={22}><Ico w={16} h={18}><ellipse cx="6.500" cy="3" rx="5" ry="2.200" /><path d="M1.500 3v10q0 1.500 4 2M11.500 3v5" /><path d="M10.500 9v8M6.500 13h8" strokeWidth="2" stroke="#333" /></Ico></Slot>
      <Sep $ml={17} />
      <Slot $w={18} $ml={14}><Ico><path d="M11 13.500H.7V1h12.600v8M4 11V8M7 11V4.500M10 11V6.500" /><path d="M14 10v8M10 14h8" strokeWidth="2" stroke="#333" /></Ico></Slot>
      <Slot $w={6} $ml={11}><Caret /></Slot>
      <Slot $w={17} $ml={13}><Ico w={17}><path d="M6.500.7h9.800v10H6.500zM9 8.500V6.500M11.500 8.500V4M14 8.500V5M4.500 6.500H.7v9.800h10v-3M4 14v-2M7 14v-1" /></Ico></Slot>
      <Slot $w={18} $ml={18}><Ico><path d="M10 13.500H.7V1h12.600v8M4 11V8M7 11V4.500M10 11V6.500" /><path d="M11 10l6 7M17 10l-6 7" strokeWidth="2" stroke="#333" /></Ico></Slot>
      <Slot $w={6} $ml={11}><Caret /></Slot>
      <Sep $ml={11} />
      <Slot $w={17} $ml={15}><Ico w={17}><path d="M.7 1.500h3v3h-3zM5.700 1.500h3v3h-3zM10.700 1.500h3v3h-3zM.7 6.500h3v3h-3zM.7 11.500h3v3h-3zM14 7q2 5-3 8H7M9.500 12.500L7 15l2.500 2.500" /></Ico></Slot>
      <Slot $w={18} $ml={20}><Ico><path d="M3 1v13M.8 11.500L3 14l2.200-2.500M8 1h4v3H8zM8 6h6.500v3H8zM8 11h9v3H8z" /></Ico></Slot>
      <Slot $w={18} $ml={19}><Ico><path d="M3 1v13M.8 11.500L3 14l2.200-2.500M8 1h9v3H8zM8 6h6.500v3H8zM8 11h4v3H8z" /></Ico></Slot>
      <Sep $ml={17} />
      <Slot $w={13} $ml={18}><Ico w={13} h={20}><path d="M9 1l3 2-7 11H3v-3z" /><path d="M0 18.500h13" strokeWidth="2" /></Ico></Slot>
      <Slot $w={6} $ml={10}><Caret /></Slot>
      <Slot $w={12} $ml={15}><Ico w={12} h={18} c="#b0b0b0"><path d="M9 5L4.500 12q-.5 2 1 1.500L11 6q1-4-1.500-4.500T5 4L1.500 10q-1.500 5 1.500 5.800T9 12" /></Ico></Slot>
      <Slot $w={6} $ml={14}><Caret c="#b0b0b0" /></Slot>
      <Slot $w={34} $ml={6} $on><TIcon c="#333" /></Slot>
      <Slot $w={13} $ml={11}><Ico w={13} h={18}><path d="M7 1l5 3-1 1-1 4 1 3-9-4 2-1 3-4zM5 10l-3 6" /></Ico></Slot>
      <ViewSelect>
        <Fit w={83}>Entire View</Fit>
        <SelectArrow><Caret s={6} c="#555" /></SelectArrow>
      </ViewSelect>
      <Sep $ml={16} />
      <Slot $w={20} $ml={14}><Ico w={20} h={14}><path d="M.7.7h3v2.500h-3zM.7 5.500h3V8h-3zM.7 10.500h3V13h-3zM6 .7h13.300v12.600H6zM9 11V8M12.500 11V4M16 11V6" /></Ico></Slot>
      <Slot $w={6} $ml={7}><Caret /></Slot>
      <Slot $w={18} $ml={14}><Ico><path d="M.5 1.500h17M2 1.500v9.500h14V1.500M9 11v5.500M6 16.500h6" /></Ico></Slot>
      <Sep $ml={18} />
      <ShowMe>
        <svg width="14" height="14" viewBox="0 0 14 14">
          <path d="M0 0h11v3H0z" fill="#86709b" /><path d="M0 4h14v3H0z" fill="#80a3d0" /><path d="M0 8h5v2.500H0z" fill="#f3a57b" /><path d="M0 11h8v3H0z" fill="#fb6f7f" />
        </svg>
        <Fit w={67}>Show Me</Fit>
      </ShowMe>
    </ToolBar>
  );
}

export default function App() {
  return (
    <Screen>
      <Global />
      <TabStrip>
        <TabSearch>
          <svg width="12" height="8" viewBox="0 0 12 8" fill="none" stroke="#1f1f1f" strokeWidth="2"><path d="M1.500 1.500L6 6l4.500-4.500" /></svg>
        </TabSearch>
        <Tab>
          <FaGithub size={20} color="#24292f" />
          <TabTitle><Fit w={211}>Smart-bridge/assignment 2/Scr</Fit></TabTitle>
          <MdClose size={16} />
        </Tab>
        <NewTab><MdAdd size={22} /></NewTab>
        <WindowButtons>
          <svg width="14" height="14" viewBox="0 0 14 14" stroke="#111"><path d="M0 6.500h13" /></svg>
          <svg width="14" height="14" viewBox="0 0 14 14" stroke="#111" fill="none" strokeWidth="1.1"><rect x=".6" y="3" width="10" height="10" rx="1.5" /><path d="M3 .8h8q2 0 2 2v8" /></svg>
          <svg width="14" height="14" viewBox="0 0 14 14" stroke="#111" strokeWidth="1.1"><path d="M.5.5l13 13M13.500.5l-13 13" /></svg>
        </WindowButtons>
      </TabStrip>
      <TopRow>
        <TopInner>
          <NavButtons>
            <MdArrowBack size={22} />
            <MdArrowForward size={22} color="#a8a8a8" />
            <MdRefresh size={22} />
          </NavButtons>
          <Omnibox>
            <SiteInfo>
              <svg width="16" height="14" viewBox="0 0 16 14" fill="none" stroke="#333" strokeWidth="1.8"><circle cx="3.5" cy="3" r="2" /><path d="M8 3h7M1 11h6" /><circle cx="12.5" cy="11" r="2" /></svg>
            </SiteInfo>
            <Url>
              <b><Fit w={87}>github.com</Fit></b>
              <Fit w={774}>/pranavitanvi/Smart-bridge/blob/main/assignment%202/Screenshot%202025-07-23%20223039.png</Fit>
            </Url>
            <OmniIcons>
              <MdOutlineInstallDesktop size={23} />
              <MdStarBorder size={23} />
            </OmniIcons>
          </Omnibox>
          <ActionIcons>
            <MdOutlineExtension size={24} />
            <ActionDivider />
            <Avatar>R</Avatar>
            <MdMoreVert size={24} />
          </ActionIcons>
        </TopInner>
      </TopRow>
      <Bookmarks>
        <BookmarkGrid>
          <svg width="18" height="18" viewBox="0 0 18 18" fill="none" stroke="#555" strokeWidth="2"><path d="M1 1h5.500v5.500H1zM11.500 1H17v5.500h-5.500zM1 11.500h5.500V17H1zM11.500 11.500H17V17h-5.500z" /></svg>
        </BookmarkGrid>
        <BookmarkDivider />
        {bookmarks.map((b, i) => (
          <Bookmark key={i} $w={b.w} $icon={b.icon}>
            <span>{b.node}</span>
            <Fit w={b.tw}>{b.label}</Fit>
          </Bookmark>
        ))}
      </Bookmarks>

      <Page>
        <LeftGutter>
          <ScrollColumn>
            <ScrollHead />
            <ScrollTrack $pl={11}>
              <ScrollArrow />
              <Thumb $top={163} $h={637} $w={14} $after={12} />
              <ScrollArrow down />
            </ScrollTrack>
          </ScrollColumn>
        </LeftGutter>
        <Tableau>
          <Tools />
          <Work>
            <DataPane>
              <PaneTabs>
                <PaneTab $active><Fit w={36}>Data</Fit></PaneTab>
                <PaneTab>
                  <Fit w={68}>Analytics</Fit>
                  <svg width="6" height="10" viewBox="0 0 6 10" fill="none" stroke="#555" strokeWidth="1.2"><path d="M5.300.7L1 5l4.300 4.300" /></svg>
                </PaneTab>
              </PaneTabs>
              <Source>
                <svg width="17" height="16" viewBox="0 0 17 16" fill="none" stroke="#777" strokeWidth="1.1">
                  <ellipse cx="5.5" cy="2.7" rx="4.5" ry="2" /><path d="M1 2.700v6.500q0 1.500 3 2M1 6q1 1.500 3 1.700" />
                  <ellipse cx="8.5" cy="6" rx="4.3" ry="1.9" fill="#fff" /><path d="M4.200 6v6q0 1.800 4 2.200M12.800 6v2" />
                  <circle cx="12.5" cy="11.7" r="3.7" fill="#2f7fa5" stroke="none" /><path d="M10.800 11.700l1.300 1.300 2.200-2.400" stroke="#fff" />
                </svg>
                <Fit w={128}>supermarket_sale...</Fit>
              </Source>
              <SearchRow>
                <SearchBox>
                  <Fit w={46}>Search</Fit>
                  <svg width="10" height="11" viewBox="0 0 10 11" fill="none" stroke="#666" strokeWidth="1.1"><circle cx="6" cy="4" r="3.2" /><path d="M3.700 6.500L.5 10.300" /></svg>
                </SearchBox>
                <svg width="13" height="13" viewBox="0 0 13 13" fill="none" stroke="#666" strokeWidth="1.1"><path d="M.8.8h11.400L8 6v6L5 10.200V6z" /></svg>
                <MiniSep />
                <svg width="13" height="11" viewBox="0 0 13 11" stroke="#555" strokeWidth="1.3"><path d="M0 1h2.500M4 1h4M9 1h4M0 4h2.500M4 4h4M9 4h4M0 7h2.500M4 7h4M9 7h4M0 10h2.500M4 10h4M9 10h4" /></svg>
                <Slot $w={20} $ml={1}><Caret s={7} c="#555" /></Slot>
              </SearchRow>
              <TablesTitle><Fit w={50}>Tables</Fit></TablesTitle>
              {dims.map((f) => <FieldItem key={f.n} f={f} h={24.5} />)}
              <FieldRule />
              {measures.map((f) => <FieldItem key={f.n} f={f} h={24.55} />)}
            </DataPane>
            <Cards>
              <Card $h={66}><CardTitle><Fit w={39}>Pages</Fit></CardTitle></Card>
              <Card $h={87}><CardTitle><Fit w={40}>Filters</Fit></CardTitle></Card>
              <Card $h={297}>
                <CardTitle><Fit w={40}>Marks</Fit></CardTitle>
                <MarkType>
                  <svg width="12" height="10" viewBox="0 0 12 10" stroke="#888" strokeWidth="1.6"><path d="M0 1.500h5M2.500 4h5M4 6.500h5M7 9h5M5 1v3M7 4v3M9 6v3" /></svg>
                  <Fit w={55}>Gantt Bar</Fit>
                  <SelectArrow><Caret s={6} c="#555" /></SelectArrow>
                </MarkType>
                <MarkGrid>
                  <MarkButton><DotsIcon /><Fit w={28}>Color</Fit></MarkButton>
                  <MarkButton><SizeIcon /><Fit w={22}>Size</Fit></MarkButton>
                  <MarkButton><TIcon /><Fit w={28}>Label</Fit></MarkButton>
                  <MarkButton><DetailIcon /><Fit w={30}>Detail</Fit></MarkButton>
                  <MarkButton><TooltipIcon /><Fit w={36}>Tooltip</Fit></MarkButton>
                </MarkGrid>
                <PillList>
                  {[<DotsIcon key="d" />, <SizeIcon key="s" />, <TIcon key="t" />].map((ic, i) => (
                    <PillRow key={i}>
                      {ic}
                      <Pill $w={134} $c="#00b180" $pl={12}><Fit w={109}>SUM(Gross Inc..</Fit></Pill>
                    </PillRow>
                  ))}
                </PillList>
              </Card>
            </Cards>
            <Canvas>
              <Shelf>
                <ShelfName>
                  <svg width="11" height="13" viewBox="0 0 11 13" stroke="#555" strokeWidth="2"><path d="M1.200 0v2M5.500 0v2M9.800 0v2M1.200 3v9.500M5.500 3v9.500M9.800 3v9.500" /></svg>
                  <Fit w={58}>Columns</Fit>
                </ShelfName>
                <Pill $w={168} $c="#4996b2" $pl={12}>
                  <Fit w={81}>Product line</Fit>
                  <svg width="10" height="10" viewBox="0 0 10 10" stroke="#fff" strokeWidth="1.4"><path d="M0 1h3.500M0 4.800h6.500M0 8.700h10" /></svg>
                </Pill>
              </Shelf>
              <Shelf>
                <ShelfName>
                  <svg width="12" height="11" viewBox="0 0 12 11" stroke="#555" strokeWidth="1.9"><path d="M0 1h2M3 1h9M0 5.300h2M3 5.300h9M0 9.600h2M3 9.600h9" /></svg>
                  <Fit w={35}>Rows</Fit>
                </ShelfName>
                <Pill $w={168} $c="#00b180" $pl={12}>
                  <Fit w={117}>SUM(Gross Inco..</Fit>
                  <svg width="9" height="10" viewBox="0 0 9 10" fill="none" stroke="#fff" strokeWidth="1.1"><path d="M4.500 1L8 9H1z" /></svg>
                </Pill>
              </Shelf>
              <ViewArea>
                <View>
                  <ChartTitle><Fit w={352}>Gross Income by Product Line</Fit></ChartTitle>
                  <ChartFrame>
                    {bars.map((b, i) => (
                      <ChartCell key={b.n} $total={i === 6}>
                        <BarLabel $bold={i === 6}><Fit w={i === 6 ? 53 : 44}>{b.v}</Fit></BarLabel>
                        <Bar $c={b.c} style={{ height: b.bottom - b.top, marginBottom: FRAME_BOTTOM - b.bottom }} />
                      </ChartCell>
                    ))}
                  </ChartFrame>
                  <AxisLabels>
                    {bars.map((b) => <div key={b.n}><Fit w={b.w}>{b.n}</Fit></div>)}
                  </AxisLabels>
                </View>
                <Legend>
                  <LegendTitle><Fit w={134}>SUM(Gross Income)</Fit></LegendTitle>
                  <LegendRamp />
                  <LegendScale><Fit w={58}>2,342.6</Fit><Fit w={58}>2,673.6</Fit></LegendScale>
                </Legend>
              </ViewArea>
            </Canvas>
          </Work>
          <SheetTabs>
            <SheetTab $w={154}><DbGlyph /><Fit w={80}>Data Source</Fit></SheetTab>
            <SheetTab $w={86}><Fit w={68}>Area chart</Fit></SheetTab>
            <SheetTab $w={67}><Fit w={50}>Sheet 2</Fit></SheetTab>
            <SheetTab $w={85}><Fit w={68}>Text Table</Fit></SheetTab>
            <SheetTab $w={133}><Fit w={114}>Highlighted Table</Fit></SheetTab>
            <SheetTab $w={82}><Fit w={65}>Text table</Fit></SheetTab>
            <SheetTab $w={118}><GridGlyph /><Fit w={82}>Dashboard 1</Fit></SheetTab>
            <SheetTab $w={59}><Fit w={44}>Funnel</Fit></SheetTab>
            <SheetTab $w={72} $active><Fit w={58}>Waterfal</Fit></SheetTab>
            <SheetTab $w={118}><GridGlyph /><Fit w={83}>Dashboard 3</Fit></SheetTab>
            <SheetTab $w={30}><NewSheetGlyph k={0} /></SheetTab>
            <SheetTab $w={31}><NewSheetGlyph k={1} /></SheetTab>
            <SheetTab $w={30}><NewSheetGlyph k={2} /></SheetTab>
          </SheetTabs>
        </Tableau>
        <RightGutter>
          <ScrollTrack $pl={3}>
            <ScrollArrow w={13} />
            <Thumb $top={180} $h={588} $w={11} $after={65} />
            <ScrollArrow w={13} down />
          </ScrollTrack>
        </RightGutter>
      </Page>

      <Taskbar>
        <Weather>
          <WeatherArt>
            <svg width="36" height="44" viewBox="0 0 36 44">
              <path d="M13 8q-1 8-12 12 2 6 12 4l8-12z" fill="#f5a125" />
              <path d="M8 35q-7-.5-7-7 0-5 6-6 2-7 9-7 6 0 8 6 7 .5 7 7 0 6.500-6 7z" fill="#a9c4f1" />
              <path d="M8 35q-6-.5-7-6 8 3 14-1 8 4 16 0-1 6.500-6 7z" fill="#86a8e4" />
            </svg>
            <Badge $c="#c42b1c" $top={0} $right={1}>9+</Badge>
          </WeatherArt>
          <WeatherText>
            <div><Fit w={32}>23°C</Fit></div>
            <div><Fit w={95}>Mostly cloudy</Fit></div>
          </WeatherText>
        </Weather>
        <WinLogo />
        <SearchPill>
          <svg width="19" height="20" viewBox="0 0 19 20" fill="none" stroke="#222" strokeWidth="2"><circle cx="8" cy="8.5" r="6.7" /><path d="M12.500 13.500L18 19" /></svg>
          <SearchText><Fit w={53}>Search</Fit></SearchText>
          <Tiger />
        </SearchPill>
        <TaskApp><TaskView /></TaskApp>
        <TaskApp><Chrome /></TaskApp>
        <TaskApp><Edge /></TaskApp>
        <TaskApp><Copilot /><Indicator $w={8} $c="#8a8678" /></TaskApp>
        <TaskApp><Folder /></TaskApp>
        <TaskApp><Excel /></TaskApp>
        <TaskApp>
          <IconLayer><FaWhatsapp size={33} color="#178c56" /><Badge $c="#267f93" $top={-5} $right={-5}>2</Badge></IconLayer>
        </TaskApp>
        <TaskApp><Teams /></TaskApp>
        <TaskApp><SpotifyApp /><Indicator $w={8} $c="#868b8b" /></TaskApp>
        <TaskApp><ActiveTile /><IconLayer><Chrome /></IconLayer><Indicator $w={20} $c="#267f93" /></TaskApp>
        <Tray>
          <svg width="14" height="9" viewBox="0 0 14 9" fill="none" stroke="#222" strokeWidth="1.6"><path d="M1 8l6-6 6 6" /></svg>
          <CloudStatus>
            <svg width="21" height="18" viewBox="0 0 21 18">
              <path d="M5 13.500Q.8 13 .8 9.500T5 6q1-4.500 6-4.500 4 0 5.500 4.500 3 1 2.500 4" fill="#9a9a9a" stroke="#333" strokeWidth="1.6" />
              <circle cx="15" cy="12" r="5.8" fill="#0a64c4" />
              <path d="M15 8.200v1.600M15 11v4.200" stroke="#fff" strokeWidth="1.7" />
            </svg>
          </CloudStatus>
          <TrayLang>
            <div><Fit w={29}>ENG</Fit></div>
            <div><Fit w={15}>IN</Fit></div>
          </TrayLang>
          <TrayIcons>
            <svg width="20" height="17" viewBox="0 0 20 17" fill="none" stroke="#1b1b1b" strokeWidth="1.3"><path d="M1 7Q10-2 19 7M3.700 9.500q6.300-6 12.600 0M6.300 12q3.700-3.500 7.400 0" /><circle cx="10" cy="14.3" r="1.6" fill="#1b1b1b" stroke="none" /></svg>
            <svg width="20" height="17" viewBox="0 0 20 17" fill="none" stroke="#1b1b1b" strokeWidth="1.3"><path d="M1 6h3l4-4v13l-4-4H1zM11 6q1.500 2.500 0 5M13.800 4q3 4.500 0 9M16.500 2q4 6.500 0 13" /></svg>
            <svg width="20" height="17" viewBox="0 0 20 17" fill="none" stroke="#1b1b1b" strokeWidth="1.4"><rect x=".8" y="3" width="16" height="11" rx="2.5" /><path d="M18.500 6.500v4" strokeWidth="2" /><rect x="3" y="5.2" width="6" height="6.6" fill="#1b1b1b" stroke="none" /></svg>
          </TrayIcons>
          <Clock>
            <div><Fit w={61}>10:03:PM</Fit></div>
            <div><Fit w={78}>29-07-2025</Fit></div>
          </Clock>
        </Tray>
      </Taskbar>
    </Screen>
  );
}
